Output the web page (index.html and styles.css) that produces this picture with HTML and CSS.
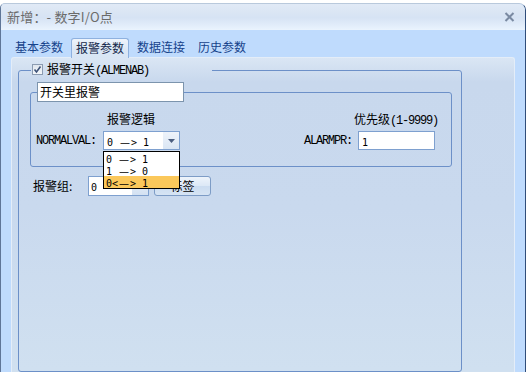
FILE: index.html
```html
<!DOCTYPE html>
<html lang="zh">
<head>
<meta charset="utf-8">
<title>新增：- 数字I/O点</title>
<link rel="stylesheet" href="styles.css">
</head>
<body>
<div class="window">
  <div class="titlebar">
    <span class="title">新增：- 数字I/O点</span>
    <svg class="close" width="11" height="10" viewBox="0 0 11 10"><path d="M1.5 1 L9.5 9 M9.5 1 L1.5 9" stroke="#7a8aa2" stroke-width="2" fill="none"/></svg>
  </div>
  <div class="client">
    <div class="tabs">
      <div class="tab">基本参数</div>
      <div class="tab active">报警参数</div>
      <div class="tab">数据连接</div>
      <div class="tab">历史参数</div>
    </div>
    <div class="panel">
      <fieldset class="group1">
        <legend class="legend1">
          <span class="check"><svg width="9" height="9" viewBox="0 0 9 9"><path d="M1.5 4.5 L3.5 7 L7.5 1.5" stroke="#3e5378" stroke-width="1.6" fill="none"/></svg></span>
          <span class="cklabel">报警开关<span class="mono">(ALMENAB)</span></span>
        </legend>
        <fieldset class="group2">
          <legend class="legend2"><span class="textbox">开关里报警</span></legend>
          <div class="row1">
            <span class="logic">报警逻辑</span>
            <span class="prio">优先级<span class="mono">(1-9999)</span></span>
          </div>
          <div class="row2">
            <span class="mono lbl-normal">NORMALVAL:</span>
            <div class="combo">
              <span class="combo-text"><span class="a">0 </span><span class="fw">—</span><span class="a">&gt; 1</span></span>
              <span class="combo-btn"><svg width="7" height="4" viewBox="0 0 7 4"><path d="M0 0 H7 L3.5 4 Z" fill="#4b5e80"/></svg></span>
              <div class="droplist">
                <div class="item"><span class="a">0 </span><span class="fw">—</span><span class="a">&gt; 1</span></div>
                <div class="item"><span class="a">1 </span><span class="fw">—</span><span class="a">&gt; 0</span></div>
                <div class="item sel"><span class="a">0&lt;</span><span class="fw">—</span><span class="a">&gt; 1</span></div>
              </div>
            </div>
            <div class="right">
              <span class="mono lbl-alarm">ALARMPR:</span>
              <span class="input-num"><span class="a">1</span></span>
            </div>
          </div>
        </fieldset>
        <div class="row3">
          <span class="lbl-group">报警组:</span>
          <div class="spin">
            <span class="spin-text"><span class="a">0</span></span>
            <span class="spin-btn"></span>
          </div>
          <button class="btn">标签</button>
        </div>
      </fieldset>
    </div>
  </div>
</div>
</body>
</html>
```

FILE: styles.css
```css
* { box-sizing: border-box; }

html, body {
  margin: 0;
  padding: 0;
  width: 526px;
  height: 372px;
  overflow: hidden;
  background: #ffffff;
  font-family: "Noto Sans CJK SC", sans-serif;
  font-size: 12px;
  color: #000;
}

.window {
  margin-top: 3px;
  height: 369px;
  display: flex;
  flex-direction: column;
  border: 1px solid #9fb2cb;
  border-top-color: #b9c9dc;
  border-left-color: #5f7698;
  border-right-color: #2f4d7a;
  border-bottom: none;
  border-radius: 5px 7px 0 0;
  overflow: hidden;
  background: #bedbfd;
}

.titlebar {
  height: 26px;
  flex: none;
  display: flex;
  align-items: center;
  justify-content: space-between;
  padding: 0 10px 0 6px;
  background: linear-gradient(#e1eaf6 0%, #dbe6f4 30%, #d6e3f4 55%, #e0ebf9 80%, #e8f2fd 100%);
  border-bottom: 1px solid #eaf3fd;
}

.title {
  font-size: 13px;
  color: #6b6b6b;
  line-height: 26px;
  letter-spacing: 0.2px;
}

.close { display: block; margin-top: 1px; }

.client {
  flex: 1;
  padding: 0 10px;
  display: flex;
  flex-direction: column;
  background: #bfdbfd;
}

.tabs {
  height: 27px;
  flex: none;
  display: flex;
  align-items: flex-end;
  gap: 3px;
  padding-left: 0;
  margin-left: -1px;
}

.tab {
  width: 58px;
  height: 19px;
  line-height: 18px;
  text-align: center;
  color: #15428b;
  font-size: 12px;
}

.tab.active {
  height: 20px;
  margin-bottom: -1px;
  position: relative;
  z-index: 1;
  color: #15284a;
  border: 1px solid #8eb1df;
  border-bottom: none;
  border-radius: 3px 3px 0 0;
  background: linear-gradient(#eef4fc, #dbe7f5 60%, #d8e5f4);
}

.panel {
  flex: 1;
  border: 1px solid #e4edf8;
  border-bottom: none;
  border-radius: 3px 3px 0 0;
  padding: 5px 0 0 6px;
  background: linear-gradient(#dae6f4 0px, #c8d8ed 24px, #c9d9ee 150px, #d0e0f0 310px);
}

fieldset { margin: 0; min-width: 0; }

.group1 {
  width: 444px;
  height: 309px;
  border: 1px solid #6c90c8;
  border-radius: 3px;
  padding: 0 0 0 11px;
}

.legend1 {
  width: 181px;
  height: 14px;
  margin-left: 1px;
  padding: 0 0 0 1px;
  display: flex;
  align-items: center;
  gap: 4px;
}

.check {
  width: 11px;
  height: 11px;
  margin-top: -2px;
  border: 1px solid #8c9cb2;
  background: linear-gradient(#dfe6ee, #f4f7fa);
  display: flex;
  align-items: center;
  justify-content: center;
}
.check svg { display: block; }

.cklabel { line-height: 14px; white-space: nowrap; }

.mono {
  font-family: "Liberation Mono", monospace;
  font-size: 12px;
  letter-spacing: -1.2px;
}

.group2 {
  width: 422px;
  margin-top: 5px;
  border: 1px solid #6c90c8;
  border-radius: 3px;
  padding: 0 0 16px 0;
}

.legend2 {
  margin-left: 6px;
  padding: 0;
  height: 20px;
}

.textbox {
  display: block;
  width: 147px;
  height: 20px;
  border: 1px solid #7c94ad;
  background: #fff;
  padding-left: 2px;
  line-height: 18px;
  font-size: 12px;
}

.row1 {
  margin-top: 10px;
  height: 14px;
  line-height: 14px;
  display: flex;
  justify-content: space-between;
}

.logic { margin-left: 76px; }
.prio { margin-right: 13px; white-space: nowrap; }

.row2 {
  margin-top: 5px;
  height: 19px;
  display: flex;
  align-items: center;
}

.lbl-normal { width: 67px; margin-left: 5px; }

.a {
  font-family: "DejaVu Sans Mono", monospace;
  font-size: 10px;
  white-space: pre;
}
.fw {
  font-family: "DejaVu Sans", sans-serif;
  font-size: 10px;
  display: inline-block;
  width: 12px;
  text-align: center;
}

.combo {
  position: relative;
  width: 77px;
  height: 19px;
  border: 1px solid #7ea0cf;
  background: #fff;
  display: flex;
}

.combo-text {
  flex: 1;
  padding-left: 3px;
  line-height: 17px;
  white-space: nowrap;
}

.combo-btn {
  width: 16px;
  background: linear-gradient(#eef3fa, #dae6f4);
  display: flex;
  align-items: center;
  justify-content: center;
}
.combo-btn svg { display: block; }

.droplist {
  position: absolute;
  top: 19px;
  left: -1px;
  width: 77px;
  height: 38px;
  border: 1px solid #000;
  background: #fff;
  z-index: 5;
}

.item {
  height: 12px;
  line-height: 12px;
  padding-left: 2px;
  white-space: nowrap;
}
.item.sel { background: #fbc85b; }

.right {
  margin-left: auto;
  margin-right: 16px;
  display: flex;
  align-items: center;
}

.lbl-alarm { width: 54px; }

.input-num {
  width: 77px;
  height: 19px;
  border: 1px solid #7ea0cf;
  background: #fff;
  padding-left: 3px;
  line-height: 17px;
}

.row3 {
  margin-top: 9px;
  height: 20px;
  display: flex;
  align-items: center;
}

.lbl-group { width: 55px; margin-left: 3px; line-height: 20px; }

.spin {
  width: 61px;
  height: 20px;
  border: 1px solid #7ea0cf;
  background: #fff;
  display: flex;
}
.spin-text { flex: 1; padding-left: 2px; line-height: 18px; }
.spin-btn { width: 16px; background: linear-gradient(#eaf1fa, #d3e1f2); }

.btn {
  margin-left: 5px;
  width: 57px;
  height: 20px;
  padding: 0;
  border: 1px solid #7d9cc6;
  border-radius: 3px;
  background: linear-gradient(#eef4fb, #dce8f6 50%, #cbdcf0 51%, #d6e4f4);
  font-family: "Noto Sans CJK SC", sans-serif;
  font-size: 12px;
  color: #000;
  line-height: 18px;
}
```
